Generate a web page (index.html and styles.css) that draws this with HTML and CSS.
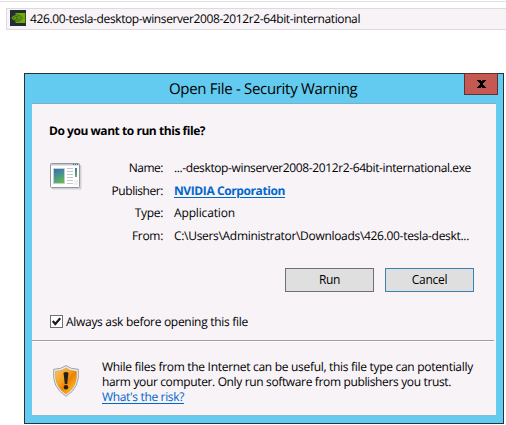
FILE: index.html
```html
<!DOCTYPE html>
<html lang="en">
<head>
<meta charset="utf-8">
<title>Open File - Security Warning</title>
<link rel="stylesheet" href="styles.css">
</head>
<body>
<header class="filebar">
  <svg class="nv" width="16" height="16" viewBox="0 0 16 16">
    <rect width="16" height="16" fill="#252a37"/>
    <path d="M5.500 3h9.800v10H5.500z" fill="#70ad04"/>
    <path d="M1 7.800Q3.500 4.400 7 4.700Q11 5 12.600 8.200Q10.500 11.600 6.800 11.400Q3 11 1 7.800z" fill="#6aa80b" stroke="#2f4a24" stroke-width=".7"/>
    <path d="M3 7.800Q5.500 5.800 7.800 6.600Q9.700 7.300 10.600 8.500Q8.500 10.300 6.300 9.900Q4.200 9.500 3 7.800z" fill="#70ad04" stroke="#2f4a24" stroke-width=".7"/>
    <path d="M5.300 7.900Q6.700 7.100 8.300 8.300L6.900 9z" fill="#2f4a24"/>
  </svg>
  <span class="filename">426.00-tesla-desktop-winserver2008-2012r2-64bit-international</span>
</header>
<main class="dialog">
  <div class="caption">
    <span class="caption-text">Open File - Security Warning</span>
    <button class="close" aria-label="Close"><svg width="9" height="8" viewBox="0 0 9 8"><path d="M0 0h4v1h1.500V0H9v1H8v1H7v1H6v2h1v1h1v1h1v1H5V7H4v1H0V7h1V6h1V5h1V3H2V2H1V1H0z" fill="#000"/></svg></button>
  </div>
  <div class="client">
    <h1 class="question">Do you want to run this file?</h1>
    <div class="details">
      <svg class="app" width="32" height="27" viewBox="0 0 32 27">
        <defs>
          <linearGradient id="scene" x1="0" y1="0" x2=".35" y2="1"><stop offset="0" stop-color="#3c67a8"/><stop offset=".5" stop-color="#468f96"/><stop offset="1" stop-color="#62b553"/></linearGradient>
        </defs>
        <rect x="1.500" y="2" width="30" height="24.500" rx="1" fill="#d4d0d5"/>
        <rect x=".5" y=".5" width="29" height="24" rx="1" fill="#fff" stroke="#92969d"/>
        <path d="M1 1h28v1.500H1z" fill="#c3cad2"/>
        <path d="M23 1.500h1m1 0h1m1 0h1" stroke="#505b68"/>
        <rect x="3.500" y="5.500" width="11" height="15" fill="url(#scene)" stroke="#c3cedb"/>
        <path d="M17 5.500h6m-6 3h6m-6 3h6m-6 3h6m-6 3h6m-6 3h6" transform="translate(0 0)" stroke="#c9c4c8"/>
        <path d="M17 5.500h6M17 8.500h6M17 11.500h6M17 14.500h6M17 17.500h6M17 20.500h6" stroke="#c9c4c8"/>
        <rect x="25" y="5" width="2" height="9" fill="url(#scene)"/>
        <path d="M24 17h4v5h-4z" fill="#edf0f1"/>
      </svg>
      <dl class="fields">
        <dt class="k-name">Name:</dt><dd class="v-name">...-desktop-winserver2008-2012r2-64bit-international.exe</dd>
        <dt class="k-publisher">Publisher:</dt><dd class="v-publisher"><a class="link">NVIDIA Corporation</a></dd>
        <dt class="k-type">Type:</dt><dd class="v-type">Application</dd>
        <dt class="k-from">From:</dt><dd class="v-from">C:\Users\Administrator\Downloads\426.00-tesla-deskt...</dd>
      </dl>
    </div>
    <div class="actions">
      <button class="btn">Run</button>
      <button class="btn btn-default">Cancel</button>
    </div>
    <label class="always">
      <svg class="check" width="13" height="13" viewBox="0 0 13 13"><rect x=".5" y=".5" width="12" height="12" fill="#fff" stroke="#707070"/><path d="M2.800 6l2.500 3 4.900-5.800" fill="none" stroke="#1c1c1c" stroke-width="2.200"/></svg>
      <span>Always ask before opening this file</span>
    </label>
    <hr class="rule">
    <div class="notice">
      <svg class="shield" width="27" height="32" viewBox="0 0 27 32">
        <defs>
          <linearGradient id="gold" x1="0" y1="0" x2="1" y2="1"><stop offset="0" stop-color="#f8c566"/><stop offset=".42" stop-color="#f5a01c"/><stop offset=".55" stop-color="#ef8200"/><stop offset="1" stop-color="#ffd83c"/></linearGradient>
        </defs>
        <path d="M13 .6Q17.500 4.200 25.300 4.300Q27.500 22.500 13 31.200Q-1.500 22.500 .7 4.300Q8.500 4.200 13 .6z" fill="#ececec" stroke="#96989a" stroke-width=".9"/>
        <path d="M13 3Q17.500 6.200 23.400 6.300Q25 21.500 13 29Q1 21.500 2.600 6.300Q8.500 6.200 13 3z" fill="url(#gold)" stroke="#d48a2c" stroke-width=".5"/>
        <path d="M10.500 7.800q2.500-1.400 5 0L14.200 19h-2.400z" fill="#252018"/>
        <circle cx="13" cy="22.300" r="2.200" fill="#252018"/>
      </svg>
      <p class="message">While files from the Internet can be useful, this file type can potentially<br><span class="m2">harm your computer. Only run software from publishers you trust.</span><br><a class="risk">What's the risk?</a></p>
    </div>
  </div>
</main>
</body>
</html>
```

FILE: styles.css
```css
* { box-sizing: border-box; }
body {
  margin: 0;
  height: 425px;
  overflow: hidden;
  background: #fff;
  border-top: 1px solid #fff;
  color: #000;
  font: 12px/15px "Open Sans", "Noto Sans", sans-serif;
  letter-spacing: -.3px;
  white-space: nowrap;
  text-rendering: geometricPrecision;
}
button { padding: 0; font: inherit; letter-spacing: inherit; color: inherit; }
svg { display: block; flex: none; }

.filebar {
  display: flex;
  height: 30px;
  padding: 8px 0 0 10px;
  border-top: 1px solid #e3e3e3;
  background: linear-gradient(#dcdadc, #dcdadc) 6px 6px / 500px 1px no-repeat,
    linear-gradient(#dcdadc, #dcdadc) 6px 27px / 500px 1px no-repeat,
    linear-gradient(#dcdadc, #dcdadc) 6px 6px / 1px 22px no-repeat,
    linear-gradient(#f7f3f7, #f7f3f7) 6px 6px / 500px 22px no-repeat;
}
.filename { margin: 0 0 0 4px; line-height: 18px; letter-spacing: -.387px; }

.dialog {
  width: 480px;
  height: 351px;
  margin: 42px 0 0 24px;
  padding: 0 7px 7px;
  border: 1px solid #27333a;
  background: #63cbef;
}
.caption { display: flex; justify-content: flex-end; height: 29px; margin-right: -2px; }
.caption-text { width: 189px; margin-right: 106px; font-size: 15px; line-height: 30px; letter-spacing: -.31px; }
.close {
  display: grid;
  place-items: center;
  width: 34px;
  height: 22px;
  margin-top: -1px;
  border: 1px solid #593237;
  background: #c65852;
}
.client { height: 313px; border-top: 1px solid #7faccb; border-bottom: 1px solid #8dbad3; background: #f7f3f7; }
.question { margin: 0; padding: 19px 0 0 17px; font-size: 12px; font-weight: 700; line-height: 15px; letter-spacing: -.45px; }
.details { display: flex; margin-top: 18px; }
.app { margin: 7px 0 0 18px; }
.fields {
  display: grid;
  grid-template-columns: 81px auto;
  grid-template-rows: 23px 23px 22px 23px;
  column-gap: 11px;
  margin: 0;
  line-height: 23px;
}
dt { text-align: right; }
dd { margin: 0; }
.k-name { letter-spacing: -.5px; }
.k-publisher { letter-spacing: -.44px; }
.v-name { letter-spacing: -.38px; }
.v-type { line-height: 22px; letter-spacing: -.15px; }
.k-type { line-height: 22px; }
.v-from { letter-spacing: -.307px; }
.link { font-weight: 700; color: #0066cc; letter-spacing: -.4px; text-decoration: underline; text-underline-offset: 2px; }
.actions { display: flex; justify-content: flex-end; gap: 11px; margin: 21px 22px 0 0; }
.btn { width: 89px; height: 24px; border: 1px solid #707070; background: #dfdfdf; line-height: 22px; }
.btn-default { border-color: #3c7fb1; }
.always { display: flex; gap: 3px; margin: 22px 0 0 18px; }
.check { margin-top: 1px; }
.rule { height: 2px; width: 462px; margin: 11px 0 0; border: 0; border-top: 1px solid #a09ca0; background: #fff; }
.notice { display: flex; padding: 17px 0 0 21px; }
.shield { margin-top: 6px; }
.message { margin: 0 0 0 22px; }
.m2 { letter-spacing: -.355px; }
.risk { color: #0066cc; letter-spacing: -.34px; text-decoration: underline; text-underline-offset: 2px; }
```
